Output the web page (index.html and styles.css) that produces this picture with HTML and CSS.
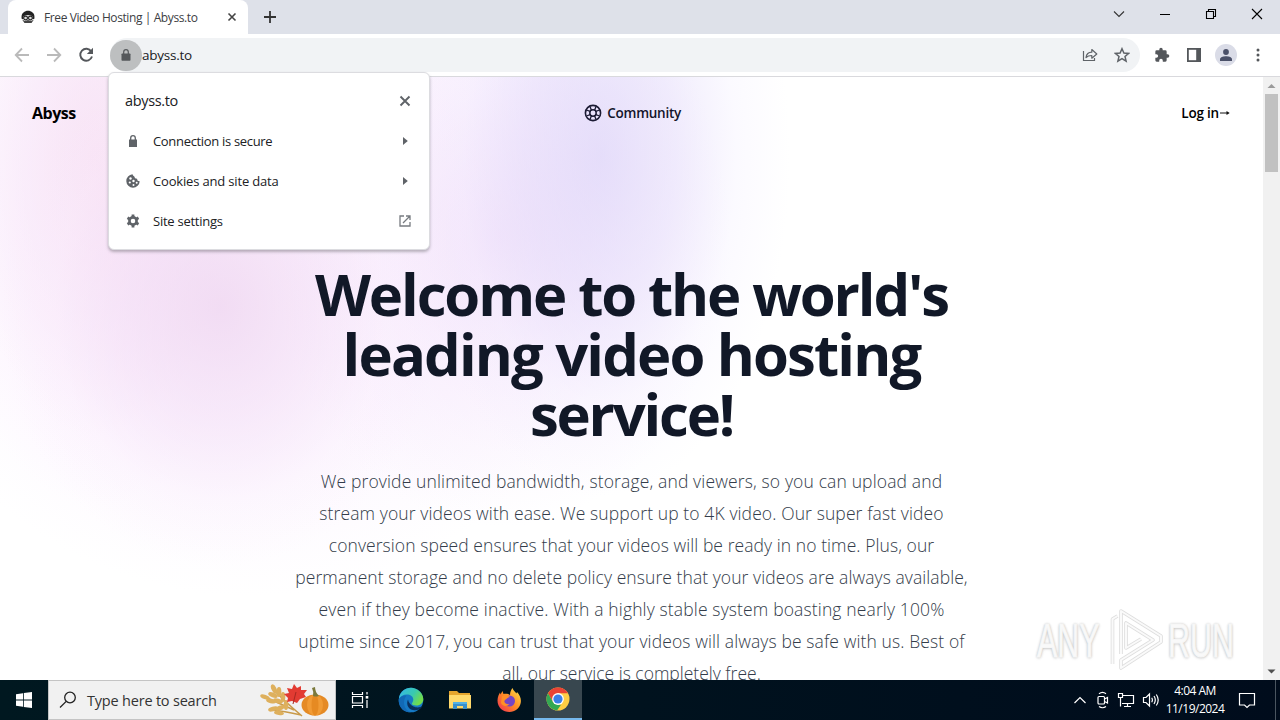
FILE: index.html
```
<!DOCTYPE html>
<html lang="en">
<head>
    <meta charset="UTF-8">
    <meta name="viewport" content="width=device-width, initial-scale=1.0">
    <title>Free Video Hosting | Abyss.to</title>
    <link rel="stylesheet" href="styles.css">
</head>
<body>
    <div class="tabstrip">
        <div class="tab">
            <svg class="favicon" width="14" height="14" viewBox="0 0 14 14"><path d="M.8 9C-.5 4 3 .8 7 .8S14.500 4 13.200 9z" fill="#222"/><path d="M2.500 6.200Q7 4 11.500 6.200L11 11.500Q7 14.500 3 11.500z" fill="#e4e4e4"/><g fill="#ddd" stroke="#222" stroke-width="1.100"><circle cx="4.600" cy="8" r="1.900"/><circle cx="9.400" cy="8" r="1.900"/></g><path d="M1 9.500l2.500 3.500h7L13 9.500l-3 1.500-3-1-3 1z" fill="#444"/></svg>
            <span class="tab-title">Free Video Hosting | Abyss.to</span>
            <svg class="tab-close" width="10" height="10" viewBox="0 0 10 10"><path d="M1.5 1.5l7 7m0-7l-7 7" stroke="#444" stroke-width="1.6"/></svg>
        </div>
        <svg class="new-tab" width="14" height="14" viewBox="0 0 14 14"><path d="M7 1v12M1 7h12" stroke="#333" stroke-width="1.8"/></svg>
        <div class="window-buttons">
            <svg width="12" height="12" viewBox="0 0 12 12"><path d="M1 3.5l5 5 5-5" fill="none" stroke="#333" stroke-width="1.1"/></svg>
            <svg width="12" height="12" viewBox="0 0 12 12"><path d="M1 6.5h10" stroke="#000"/></svg>
            <svg width="12" height="12" viewBox="0 0 12 12"><path d="M1.5 3.5h7v7h-7zM3.5 3.5v-2h7v7h-2" fill="none" stroke="#000" stroke-width="1.1"/></svg>
            <svg width="12" height="12" viewBox="0 0 12 12"><path d="M1 1l10 10M11 1L1 11" stroke="#000" stroke-width="1.1"/></svg>
        </div>
    </div>

    <div class="toolbar">
        <svg width="16" height="16" viewBox="0 0 16 16"><path d="M15 8H2M8 1.5L1.7 8 8 14.5" fill="none" stroke="#bababa" stroke-width="1.8"/></svg>
        <svg width="16" height="16" viewBox="0 0 16 16"><path d="M1 8h13M8 1.5L14.3 8 8 14.5" fill="none" stroke="#bababa" stroke-width="1.8"/></svg>
        <svg width="16" height="16" viewBox="0 0 16 16"><path d="M13.3 4.4A6 6 0 1 0 14 9.500" fill="none" stroke="#54575b" stroke-width="1.900"/><path d="M15 .8V7H8.800z" fill="#54575b"/></svg>
        <div class="omnibox">
            <div class="site-button">
                <svg width="10" height="12" viewBox="0 0 10 12"><path d="M1.200 4.500h7.600a.7.7 0 0 1 .7.7V11a.7.7 0 0 1-.7.7H1.200a.7.7 0 0 1-.7-.7V5.200a.7.7 0 0 1 .7-.7z" fill="#55585b"/><path d="M2.700 5V3a2.300 2.300 0 0 1 4.600 0v2" fill="none" stroke="#55585b" stroke-width="1.200"/></svg>
            </div>
            <span class="url">abyss.to</span>
            <svg class="share" width="16" height="16" viewBox="0 0 16 16"><path d="M1.500 4v9.500h11V11" fill="none" stroke="#5f6368" stroke-width="1.200"/><path d="M4 10.500C4.500 7 6.500 5.300 9.800 5.200V2.500L14.800 7l-5 4.200V8.500C7.200 8.500 5.500 9 4 10.500z" fill="none" stroke="#5f6368" stroke-width="1.200" stroke-linejoin="round"/></svg>
            <svg width="16" height="16" viewBox="0 0 16 16"><path d="M8 1.700l1.900 4.300 4.700.4-3.600 3.100 1.100 4.600L8 11.700l-4.100 2.400L5 9.500 1.400 6.400l4.700-.4z" fill="none" stroke="#5f6368" stroke-width="1.500"/></svg>
        </div>
        <div class="toolbar-icons">
            <svg width="16" height="16" viewBox="0 0 24 24"><path fill="#54575b" d="M20.500 11H19V7a2 2 0 0 0-2-2h-4V3.500a2.500 2.500 0 0 0-5 0V5H4a2 2 0 0 0-2 2v3.800h1.500a2.700 2.700 0 0 1 0 5.400H2V20a2 2 0 0 0 2 2h3.800v-1.500a2.700 2.700 0 0 1 5.400 0V22H17a2 2 0 0 0 2-2v-4h1.500a2.500 2.500 0 0 0 0-5z"/></svg>
            <svg width="16" height="16" viewBox="0 0 16 16"><path d="M1 1h14v14H1z" fill="#54575b"/><path d="M2.800 2.800h7.400v10.400H2.800z" fill="#fff"/></svg>
            <span class="avatar"><svg width="14" height="14" viewBox="0 0 14 14" fill="#4a5068"><circle cx="7" cy="4" r="2.900"/><path d="M1 13v-1.500C1 9 4.500 8.300 7 8.300s6 .7 6 3.200V13z"/></svg></span>
            <svg class="dots" width="4" height="14" viewBox="0 0 4 14" fill="#54575b"><circle cx="2" cy="2" r="1.500"/><circle cx="2" cy="7" r="1.500"/><circle cx="2" cy="12" r="1.500"/></svg>
        </div>
    </div>

    <div class="viewport">
        <div class="page">
            <nav class="nav">
                <a class="brand">Abyss</a>
                <a class="community">
                    <svg width="18" height="18" viewBox="0 0 18 18" fill="none" stroke="#1b1a33"><circle cx="9" cy="9" r="7.600" stroke-width="1.600"/><circle cx="9" cy="9" r="3.200" stroke-width="1.500"/><path stroke-width="1.300" d="M6 2.400l1.400 3.800M2.400 6l3.800 1.400M12 2.400l-1.400 3.800M15.600 6l-3.800 1.400M6 15.600l1.400-3.800M2.400 12l3.800-1.400M12 15.600l-1.400-3.800M15.600 12l-3.800-1.400"/></svg>
                    Community
                </a>
                <a class="login">Log in<svg width="12" height="8" viewBox="0 0 12 8"><path d="M1 4h8" stroke="#111"/><path d="M7.500 2L10.700 4 7.500 6z" fill="#111"/></svg></a>
            </nav>
            <main class="hero">
                <h1><span class="h1">Welcome to the world's</span><span class="h2">leading video hosting</span><span class="h3">service!</span></h1>
                <p>
                    <span class="p1">We provide unlimited bandwidth, storage, and viewers, so you can upload and</span>
                    <span class="p2">stream your videos with ease. We support up to 4K video. Our super fast video</span>
                    <span class="p3">conversion speed ensures that your videos will be ready in no time. Plus, our</span>
                    <span class="p4">permanent storage and no delete policy ensure that your videos are always available,</span>
                    <span class="p5">even if they become inactive. With a highly stable system boasting nearly 100%</span>
                    <span class="p6">uptime since 2017, you can trust that your videos will always be safe with us. Best of</span>
                    <span class="p7">all, our service is completely free.</span>
                </p>
            </main>
        </div>
        <div class="scrollbar">
            <svg width="17" height="17" viewBox="0 0 17 17"><path d="M4.500 11h8L8.500 7z" fill="#9a9a9a"/></svg>
            <div class="thumb"></div>
            <svg class="down" width="17" height="17" viewBox="0 0 17 17"><path d="M4.500 6.500h8l-4 4z" fill="#505050"/></svg>
        </div>
    </div>

    <div class="site-popup">
        <div class="popup-head">
            <span>abyss.to</span>
            <svg width="12" height="12" viewBox="0 0 12 12"><path d="M1.5 1.5l9 9m0-9l-9 9" stroke="#5f6368" stroke-width="1.900"/></svg>
        </div>
        <div class="popup-row">
            <svg width="14" height="14" viewBox="0 0 14 14"><path d="M3 5.500h8V13H3z" fill="#5f6368"/><path d="M4.700 6V4a2.300 2.300 0 0 1 4.600 0v2" fill="none" stroke="#5f6368" stroke-width="1.300"/></svg>
            <span class="r1">Connection is secure</span>
            <svg width="12" height="12" viewBox="0 0 12 12"><path d="M4 2v8l4.800-4z" fill="#5f6368"/></svg>
        </div>
        <div class="popup-row">
            <svg width="14" height="14" viewBox="0 0 14 14"><path d="M6.500.3a6.700 6.700 0 1 0 7.200 7 2.600 2.600 0 0 1-2.700-2.500A2.700 2.700 0 0 1 8.300 2.400 2.500 2.500 0 0 1 6.500.3z" fill="#5f6368"/><g fill="#fff"><circle cx="4.500" cy="4.500" r="1.200"/><circle cx="3.800" cy="8.500" r="1.100"/><circle cx="7.500" cy="7" r="1.200"/><circle cx="7.500" cy="11" r="1"/><circle cx="10.700" cy="8.800" r="1"/></g></svg>
            <span class="r2">Cookies and site data</span>
            <svg width="12" height="12" viewBox="0 0 12 12"><path d="M4 2v8l4.800-4z" fill="#5f6368"/></svg>
        </div>
        <div class="popup-row">
            <svg width="14" height="14" viewBox="0 0 14 14"><circle cx="7" cy="7" r="3.600" fill="none" stroke="#5f6368" stroke-width="2.600"/><path d="M7 .6v2.500M7 10.900v2.500M1.500 3.800l2.100 1.200M10.400 9l2.100 1.200M1.500 10.200L3.600 9M10.400 5l2.100-1.200" stroke="#5f6368" stroke-width="2.800"/></svg>
            <span class="r3">Site settings</span>
            <svg width="12" height="12" viewBox="0 0 12 12"><path d="M5 1H1v10h10V7M7 1h4v4M11 1L4 8" fill="none" stroke="#777b80" stroke-width="1.300"/></svg>
        </div>
    </div>

    <div class="watermark">
        <span class="any">ANY</span>
        <svg width="54" height="64" viewBox="0 0 54 64" fill="none" stroke-linejoin="round"><g class="mark-shade"><path d="M3.500 56V11l5-3"/><path d="M12 46V3l40 25v6L12 60V52l32-20-27-17v25l15-9"/></g><g class="mark-line"><path d="M3.500 56V11l5-3"/><path d="M12 46V3l40 25v6L12 60V52l32-20-27-17v25l15-9"/></g></svg>
        <span class="run">RUN</span>
    </div>

    <div class="taskbar">
        <div class="start">
            <svg width="16" height="16" viewBox="0 0 16 16" fill="#fff"><path d="M0 2.200l7-1v6.400H0zM7.800 1.100L16 0v7.600H7.800zM0 8.400h7v6.400l-7-1zM7.800 8.400H16V16l-8.200-1.100z"/></svg>
        </div>
        <div class="search">
            <svg width="18" height="18" viewBox="0 0 18 18" fill="none" stroke="#222" stroke-width="1.300"><circle cx="11" cy="6.500" r="5.300"/><path d="M7.200 10.400L1 16.500"/></svg>
            <span>Type here to search</span>
            <svg class="harvest" width="72" height="38" viewBox="0 0 72 38">
                <g stroke="#c99a4a" stroke-width="1.500" fill="none"><path d="M43 35Q25 20 13 7M42 34Q25 30 12 29M35 29L6 16"/></g>
                <g fill="#deb05d"><ellipse cx="15" cy="8" rx="2.500" ry="5" transform="rotate(-25 15 8)"/><ellipse cx="20" cy="11" rx="2.400" ry="5"/><ellipse cx="14" cy="14" rx="2.400" ry="5" transform="rotate(-70 14 14)"/><ellipse cx="24" cy="16" rx="2.300" ry="5"/><ellipse cx="19" cy="20" rx="2.300" ry="5" transform="rotate(-75 19 20)"/><ellipse cx="6" cy="16" rx="5" ry="2.200" transform="rotate(20 6 16)"/><ellipse cx="12" cy="20" rx="5" ry="2.200" transform="rotate(15 12 20)"/><ellipse cx="14" cy="28" rx="5" ry="2.300" transform="rotate(-15 14 28)"/><ellipse cx="21" cy="27" rx="5" ry="2.300" transform="rotate(-20 21 27)"/><ellipse cx="20" cy="32" rx="5" ry="2" transform="rotate(10 20 32)"/><ellipse cx="27" cy="24" rx="2.300" ry="5"/></g>
                <path d="M35 3l3 4 4-2v4l6 0-3 4 2 3-6 2-3 4-5-2-5 1 1-4-4-4 5-1-2-5 5 1z" fill="#e23b32"/><path d="M34 23l3-12" stroke="#a52821"/>
                <ellipse cx="56" cy="24" rx="13.500" ry="10.500" fill="#e58a25"/><ellipse cx="56" cy="24" rx="8" ry="10.500" fill="#f19b35"/><ellipse cx="56" cy="24" rx="3.500" ry="10.500" fill="#e68a22"/><path d="M54 15q3 1 6 0-4-4-4-9l-3 1q2 4 1 8z" fill="#7b793c"/>
            </svg>
        </div>
        <div class="task first">
            <svg width="18" height="18" viewBox="0 0 18 18" fill="none" stroke="#fff" stroke-width="1.200"><path d="M1.500 1v2.500h10V1M1.500 17v-2.500h10V17M1.500 5.500h10v6.500h-10zM16 1v2.500M16 9v8"/><path d="M14.700 5h2.600v2.600h-2.600z" fill="#fff" stroke="none"/></svg>
        </div>
        <div class="task">
            <svg width="26" height="26" viewBox="0 0 26 26"><defs><linearGradient id="edgeTop" x1="0" y1="0" x2="1" y2=".5"><stop offset="0" stop-color="#36b7ed"/><stop offset=".6" stop-color="#38c9b0"/><stop offset="1" stop-color="#72dc4b"/></linearGradient></defs><circle cx="13" cy="13" r="12.300" fill="#167ac6"/><path d="M1 12C1.500 5 7 .7 13 .7S25.300 6 25.300 12c0 4-3 6.500-7 6.500-3 0-4.500-1-4.500-2 0-.8 1.500-1.500 1.500-4 0-3-3-5-6.500-5S2.500 9 1 12z" fill="url(#edgeTop)"/><path d="M10 12.500c-3 7 3 13 11 10 1.500-.6 2.800-2 3.500-3.500-3 2-7 1.500-9 .5-3-1.400-5-4-5.500-7z" fill="#092f5d"/><path d="M8.500 8.500C4 14 5.500 23 13 25.300 4 26 0 18 .8 12 3 9 6 8 8.500 8.500z" fill="#1269b5"/></svg>
        </div>
        <div class="task">
            <svg width="24" height="20" viewBox="0 0 24 20"><path d="M1 1h8l2 2h11v15H1z" fill="#e5a52d"/><path d="M1 5h22v13.500H1z" fill="#ffd96b"/><path d="M5 19v-7h14v7h-4v-3H9v3z" fill="#398fcb"/><path d="M5 12h14v2H5z" fill="#53b0e3"/></svg>
        </div>
        <div class="task">
            <svg width="26" height="26" viewBox="0 0 26 26"><defs><linearGradient id="fox" x1="1" y1="0" x2="0" y2="1"><stop offset="0" stop-color="#ffe64b"/><stop offset=".5" stop-color="#ff8b24"/><stop offset="1" stop-color="#ef2957"/></linearGradient></defs><path d="M16.500 1c1 3 3 4 4 5.500L21 5c3 3 4.500 7 3.700 11C23.500 21.500 19 25 13.500 25 7 25 1.500 20.500 1.500 13.500 1.500 10 3 7 4 5.500l.5 2L6.500 4l1 3c3-.5 5 0 6.500 1 0-3 1-5 2.500-7z" fill="url(#fox)"/><circle cx="13.500" cy="14" r="5.500" fill="#7545c5"/><path d="M6 9c3-1.500 6-1 8 1-3 .5-3 2-5 3-2 2 1 5 4.500 4-2 3-7 2.500-8.500-1z" fill="#ff8f26"/></svg>
        </div>
        <div class="task active">
            <svg width="24" height="24" viewBox="0 0 24 24"><circle cx="12" cy="12" r="11.500" fill="#ffce44"/><path d="M2 6.250A11.500 11.500 0 0 1 22 6.250H12L7 15z" fill="#ea4335"/><path d="M2 6.250L7 15l5 2.750h3l-4 5.700A11.500 11.500 0 0 1 2 6.250z" fill="#34a853"/><circle cx="12" cy="12" r="5.900" fill="#fff"/><circle cx="12" cy="12" r="4.600" fill="#3b7fe8"/></svg>
        </div>
        <div class="tray">
            <svg width="12" height="10" viewBox="0 0 12 10"><path d="M.5 8L6 2.500 11.500 8" fill="none" stroke="#fff" stroke-width="1.200"/></svg>
            <svg class="meet" width="14" height="18" viewBox="0 0 14 18" fill="none" stroke="#fff" stroke-width="1.200"><rect x="2" y="5.500" width="6.500" height="7.500" rx="1"/><path d="M8.500 8l3-1.500v5.500l-3-1.500M3 2.800Q6.500 0 10 2.800M3 15.500q3.500 2.500 7 0"/></svg>
            <svg width="18" height="16" viewBox="0 0 18 16" fill="none" stroke="#fff" stroke-width="1.200"><path d="M5 3.500h11.500v8H5M10.500 11.500v3M7 14.500h7M1.500 1.500h4v4h-4zM3.500 5.500v9"/></svg>
            <svg width="18" height="16" viewBox="0 0 18 16" fill="none" stroke="#fff" stroke-width="1.200"><path d="M1.500 5.500H4L7.500 2v12L4 10.500H1.500zM9.700 5.800q1.400 2.200 0 4.400M12 4q2.600 4 0 8M14.300 2.500q3.800 5.500 0 11"/></svg>
        </div>
        <div class="clock"><span class="time">4:04 AM</span><span class="date">11/19/2024</span></div>
        <svg class="notice" width="18" height="18" viewBox="0 0 18 18"><path d="M1.500 2.500h15v11.500h-5L9 16.500 6.500 14h-5z" fill="none" stroke="#fff" stroke-width="1.200"/></svg>
        <div class="show-desktop"></div>
    </div>
</body>
</html>
```
FILE: styles.css
```
* {
    box-sizing: border-box;
}
body {
    margin: 0;
    width: 1280px;
    height: 720px;
    overflow: hidden;
    display: flex;
    flex-direction: column;
    font-family: "Open Sans", "Noto Sans", sans-serif;
    font-size: 13px;
    color: #202124;
    background: #fff;
}
svg {
    display: block;
    flex: none;
}
span, a {
    white-space: nowrap;
}
.tabstrip {
    display: flex;
    align-items: flex-start;
    flex: none;
    height: 34px;
    background: #dee1e9;
}
.tab {
    display: flex;
    align-items: center;
    width: 240px;
    height: 34px;
    margin-left: 8px;
    padding: 0 11px 0 13px;
    background: #fff;
    border-radius: 8px 8px 0 0;
}
.tab-title {
    margin-left: 9px;
    font-size: 12px;
    letter-spacing: -0.4px;
    color: #3c4043;
}
.tab-close {
    margin-left: auto;
}
.new-tab {
    margin: 10px 0 0 15px;
}
.window-buttons {
    display: flex;
    gap: 34px;
    margin: 8px 17px 0 auto;
}
.toolbar {
    display: flex;
    align-items: center;
    flex: none;
    gap: 16px;
    height: 43px;
    padding: 0 19px 0 14px;
    border-bottom: 1px solid #d9d9dd;
    background: #fff;
}
.omnibox {
    display: flex;
    align-items: center;
    width: 1030px;
    height: 34px;
    padding-right: 10px;
    border-radius: 17px;
    background: #f1f3f5;
}
.site-button {
    display: flex;
    align-items: center;
    justify-content: center;
    width: 32px;
    height: 31px;
    border-radius: 16px;
    background: #bdbfc0;
}
.url {
    font-size: 13.5px;
    letter-spacing: -0.25px;
}
.share {
    margin: 0 16px 0 auto;
}
.toolbar-icons {
    display: flex;
    align-items: center;
    gap: 16px;
    margin-left: -2px;
}
.avatar {
    display: flex;
    align-items: center;
    justify-content: center;
    width: 22px;
    height: 22px;
    margin: 0 -3px;
    border-radius: 50%;
    background: #dadce7;
}
.dots {
    margin-left: 6px;
}
.viewport {
    display: flex;
    flex: none;
    height: 603px;
}
/* soft pink and violet blobs behind the hero */
.page {
    width: 1263px;
    overflow: hidden;
    background:
        radial-gradient(ellipse 190px 340px at 600px 80px, rgba(218, 209, 248, 0.65), rgba(226, 217, 250, 0.5) 40%, rgba(240, 235, 255, 0.25) 72%, rgba(255, 255, 255, 0)),
        radial-gradient(ellipse 220px 260px at 220px 230px, rgba(238, 212, 240, 0.75), rgba(242, 219, 245, 0.5) 42%, rgba(250, 235, 252, 0.25) 75%, rgba(255, 255, 255, 0)),
        radial-gradient(ellipse 170px 340px at 100px 90px, rgba(246, 218, 240, 0.7), rgba(247, 226, 247, 0.5) 45%, rgba(253, 242, 254, 0.25) 80%, rgba(255, 255, 255, 0)),
        radial-gradient(ellipse 230px 290px at 500px 160px, rgba(237, 215, 247, 0.6), rgba(244, 228, 252, 0.4) 50%, rgba(255, 255, 255, 0)),
        radial-gradient(ellipse 380px 370px at 250px 150px, rgba(250, 235, 252, 0.6), rgba(250, 240, 254, 0.5) 60%, rgba(255, 255, 255, 0)),
        #fff;
}
.nav {
    display: flex;
    align-items: center;
    justify-content: space-between;
    height: 72px;
    padding: 0 32px;
    font-size: 14px;
    font-weight: 600;
    color: #14142b;
}
.brand {
    width: 52px;
    font-size: 16px;
    font-weight: 700;
    letter-spacing: -0.5px;
    color: #000;
}
.community {
    display: flex;
    align-items: center;
    gap: 5px;
    font-size: 13.5px;
    letter-spacing: -0.25px;
}
.login {
    display: flex;
    align-items: center;
    letter-spacing: -0.2px;
    font-size: 13.5px;
    color: #000;
}
.hero {
    width: 700px;
    margin: 0 auto;
    padding-top: 115px;
    text-align: center;
}
.hero span {
    display: block;
}
h1 {
    margin: 0;
    font-size: 58px;
    font-weight: 700;
    line-height: 60px;
    color: #111827;
}
.h1 {
    letter-spacing: -2.1px;
}
.h2 {
    letter-spacing: -1.85px;
}
.h3 {
    letter-spacing: -2.2px;
}
p {
    margin: 21px -20px 0;
    font-size: 17.5px;
    font-weight: 300;
    line-height: 32px;
    letter-spacing: 0.07px;
    color: #333c4a;
}
.p1, .p5 {
    letter-spacing: 0.14px;
}
.p2, .p6 {
    letter-spacing: 0.11px;
}
.p7 {
    letter-spacing: 0;
}
.scrollbar {
    display: flex;
    flex-direction: column;
    width: 17px;
    background: #f1f1f1;
}
.thumb {
    width: 13px;
    height: 78px;
    margin-left: 2px;
    background: #c1c1c1;
}
.down {
    margin-top: auto;
}
/* site information bubble */
.site-popup {
    position: absolute;
    left: 108px;
    top: 72px;
    width: 322px;
    height: 178px;
    padding: 8px 18px 0 17px;
    border: 1px solid #dcdce0;
    border-radius: 6px;
    background: #fff;
    box-shadow: 0 2px 3px rgba(60, 64, 67, 0.35);
}
.popup-head {
    display: flex;
    align-items: center;
    justify-content: space-between;
    height: 40px;
    margin-left: -1px;
    font-size: 14.5px;
    letter-spacing: -0.35px;
}
.popup-head span {
    margin-top: -2px;
}
.popup-row {
    display: flex;
    align-items: center;
    height: 40px;
}
.popup-row span {
    flex: 1;
    margin-left: 13px;
    letter-spacing: -0.25px;
}
.popup-row .r1 {
    letter-spacing: -0.32px;
}
.popup-row .r2 {
    letter-spacing: -0.17px;
}
.watermark {
    position: absolute;
    left: 1037px;
    top: 608px;
    display: flex;
    align-items: center;
    width: 200px;
    height: 64px;
    font-family: "Liberation Sans", sans-serif;
    font-size: 49px;
    color: #f9f9f9;
    text-shadow: 0 0 3px #b4b4b4, 0 1px 4px #ccc;
    -webkit-text-stroke: 1px #f6f6f6;
}
.mark-shade {
    stroke: #dedede;
    stroke-width: 3.6px;
}
.mark-line {
    stroke: #fafafa;
    stroke-width: 2px;
}
.any, .run {
    transform: scaleX(0.62);
    transform-origin: left;
}
.any {
    width: 72px;
}
.run {
    width: 66px;
    margin-left: 5px;
}
.taskbar {
    display: flex;
    align-items: center;
    flex: none;
    height: 40px;
    color: #fff;
    background: linear-gradient(90deg, #001820, #00121e 50%, #000c1c);
}
.start, .task {
    display: flex;
    align-items: center;
    justify-content: center;
    width: 48px;
    height: 40px;
}
.task {
    width: 49px;
}
.task.first {
    width: 50px;
    padding-right: 2px;
}
.search {
    display: flex;
    align-items: center;
    width: 288px;
    height: 40px;
    padding-left: 10px;
    border: 1px solid #c4c4c4;
    background: #f1f1f1;
    color: #333;
    font-size: 14.5px;
}
.search span {
    margin-left: 10px;
    letter-spacing: -0.2px;
}
.harvest {
    margin-left: auto;
    margin-right: 4px;
}
.task.active {
    width: 48px;
    margin-left: 1px;
    background: #38474f;
    border-bottom: 2px solid #76b9ed;
}
.tray {
    display: flex;
    align-items: center;
    gap: 7px;
    margin-left: auto;
}
.meet {
    margin-left: 3px;
}
.clock {
    display: flex;
    flex-direction: column;
    align-items: center;
    width: 70px;
    font-size: 12px;
    line-height: 18px;
    letter-spacing: -0.5px;
}
.notice {
    margin: 0 19px 0 8px;
}
.show-desktop {
    width: 5px;
    height: 40px;
    border-left: 1px solid #4a5560;
}
```
